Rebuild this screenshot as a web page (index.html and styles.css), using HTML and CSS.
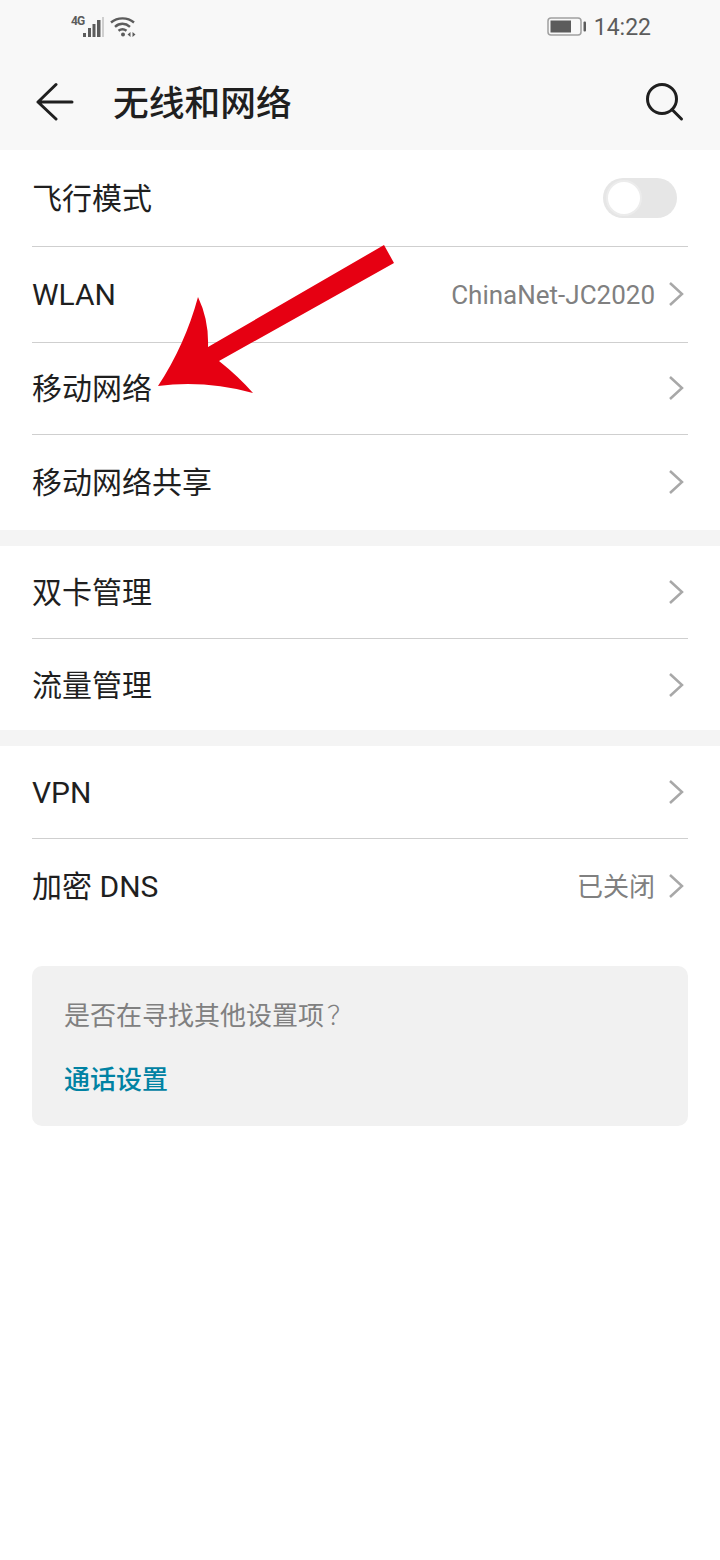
FILE: index.html
```html
<!DOCTYPE html>
<html lang="zh-CN">
<head>
  <meta charset="UTF-8">
  <meta name="viewport" content="width=device-width, initial-scale=1.0">
  <title>无线和网络</title>
  <link rel="stylesheet" href="styles.css">
</head>
<body>
  <div class="page">
    <!-- Status bar -->
    <div class="status-bar">
      <div class="status-left">
        <span class="net-type">4G</span>
        <svg class="signal" width="22" height="20" viewBox="0 0 22 20">
          <rect x="0" y="16" width="3" height="4" fill="#5c5c5c"/>
          <rect x="5" y="11" width="3" height="9" fill="#5c5c5c"/>
          <rect x="9.500" y="7" width="3" height="13" fill="#5c5c5c"/>
          <rect x="14" y="3" width="3.500" height="17" fill="#5c5c5c"/>
          <rect x="19" y="0" width="2" height="20" fill="#cfcfcf"/>
        </svg>
        <svg class="wifi" width="26" height="20" viewBox="0 0 26 20">
          <path d="M1 5.500C7.500 0 17.500 0 24 5.500" fill="none" stroke="#5c5c5c" stroke-width="2.400"/>
          <path d="M5 9.800C9.500 5.800 15.500 5.800 20 9.800" fill="none" stroke="#5c5c5c" stroke-width="2.400"/>
          <path d="M8.500 13.800C11 11.800 14 11.800 16.500 13.800" fill="none" stroke="#5c5c5c" stroke-width="2.400"/>
          <circle cx="13" cy="17.500" r="2" fill="#5c5c5c"/>
          <path d="M20.500 15v5l-3-2.500zM22.500 15v5l3-2.500z" fill="#5c5c5c"/>
        </svg>
      </div>
      <div class="status-right">
        <svg class="battery" width="40" height="20" viewBox="0 0 40 20">
          <rect x="1" y="1" width="33" height="17" rx="3" fill="none" stroke="#a0a0a0" stroke-width="1.500"/>
          <rect x="3.500" y="3.500" width="20.500" height="12" fill="#5c5c5c"/>
          <rect x="36.500" y="4.500" width="2.500" height="10" rx="1" fill="#5c5c5c"/>
        </svg>
        <span class="clock">14:22</span>
      </div>
    </div>

    <!-- Title bar -->
    <div class="title-bar">
      <svg class="back-icon" width="40" height="40" viewBox="0 0 40 40">
        <path d="M2 20H36M20 2.500L2 20L20 37" fill="none" stroke="#1f1f1f" stroke-width="3" stroke-linecap="round" stroke-linejoin="round"/>
      </svg>
      <h1>无线和网络</h1>
      <svg class="search-icon" width="40" height="40" viewBox="0 0 40 40">
        <circle cx="18" cy="17" r="14.500" fill="none" stroke="#1f1f1f" stroke-width="3"/>
        <path d="M28 27.500L37.500 37" fill="none" stroke="#1f1f1f" stroke-width="3" stroke-linecap="round"/>
      </svg>
    </div>

    <!-- Settings -->
    <div class="group group-first">
      <div class="row row-tall">
        <span class="row-label">飞行模式</span>
        <div class="switch"><div class="knob"></div></div>
      </div>
      <div class="row row-tall">
        <span class="row-label">WLAN</span>
        <span class="row-value">ChinaNet-JC2020</span>
        <svg class="chevron" width="16" height="26" viewBox="0 0 16 26"><path d="M2 2L14 13L2 24" fill="none" stroke="#a8a8a8" stroke-width="2.500"/></svg>
      </div>
      <div class="row">
        <span class="row-label">移动网络</span>
        <svg class="chevron" width="16" height="26" viewBox="0 0 16 26"><path d="M2 2L14 13L2 24" fill="none" stroke="#a8a8a8" stroke-width="2.500"/></svg>
      </div>
      <div class="row row-end">
        <span class="row-label">移动网络共享</span>
        <svg class="chevron" width="16" height="26" viewBox="0 0 16 26"><path d="M2 2L14 13L2 24" fill="none" stroke="#a8a8a8" stroke-width="2.500"/></svg>
      </div>
    </div>
    <div class="group">
      <div class="row row-mid">
        <span class="row-label">双卡管理</span>
        <svg class="chevron" width="16" height="26" viewBox="0 0 16 26"><path d="M2 2L14 13L2 24" fill="none" stroke="#a8a8a8" stroke-width="2.500"/></svg>
      </div>
      <div class="row row-end row-short">
        <span class="row-label">流量管理</span>
        <svg class="chevron" width="16" height="26" viewBox="0 0 16 26"><path d="M2 2L14 13L2 24" fill="none" stroke="#a8a8a8" stroke-width="2.500"/></svg>
      </div>
    </div>
    <div class="group group-last">
      <div class="row row-mid">
        <span class="row-label">VPN</span>
        <svg class="chevron" width="16" height="26" viewBox="0 0 16 26"><path d="M2 2L14 13L2 24" fill="none" stroke="#a8a8a8" stroke-width="2.500"/></svg>
      </div>
      <div class="row row-end">
        <span class="row-label">加密 DNS</span>
        <span class="row-value">已关闭</span>
        <svg class="chevron" width="16" height="26" viewBox="0 0 16 26"><path d="M2 2L14 13L2 24" fill="none" stroke="#a8a8a8" stroke-width="2.500"/></svg>
      </div>
    </div>

    <!-- Suggestion card -->
    <div class="hint-card">
      <p class="hint-text">是否在寻找其他设置项<span class="hint-mark">？</span></p>
      <a class="hint-link">通话设置</a>
    </div>

    <!-- Red annotation arrow -->
    <svg class="arrow" width="720" height="420" viewBox="0 0 720 420">
      <path d="M384 245L394 263L219 361Q238 376 253 393Q205 380 158 386Q185 345 198 297Q209 320 208 347Z" fill="#e60012"/>
    </svg>
  </div>
</body>
</html>
```
FILE: styles.css
```css
/* General Styles */
body {
  margin: 0;
  background: #fff;
  font-family: 'Roboto', 'Noto Sans CJK SC', sans-serif;
  color: #1f1f1f;
}

.page {
  position: relative;
  width: 720px;
  min-height: 1560px;
  overflow: hidden;
}

/* Status bar */
.status-bar {
  height: 54px;
  background: #f8f8f8;
  display: flex;
  justify-content: space-between;
  padding: 0 69px 0 71px;
  box-sizing: border-box;
}

.status-left {
  display: flex;
  align-items: flex-start;
  padding-top: 17px;
  height: 37px;
}

.net-type {
  font-size: 12px;
  font-weight: 700;
  line-height: 9px;
  letter-spacing: -1px;
  color: #5c5c5c;
  width: 12px;
}

.wifi {
  margin-left: 5px;
}

.status-right {
  display: flex;
  align-items: center;
  height: 54px;
}

.battery {
  margin-right: 7px;
}

.clock {
  font-size: 23px;
  color: #5c5c5c;
}

/* Title bar */
.title-bar {
  height: 96px;
  background: #f8f8f8;
  display: flex;
  align-items: center;
  padding: 0 36px;
}

.back-icon, .search-icon {
  flex: none;
}

.title-bar h1 {
  margin: 0 0 0 37px;
  padding-top: 4px;
  font-size: 35.750px;
  line-height: 40px;
  font-weight: 500;
  flex: 1;
}

/* Settings rows */
.group {
  background: #fff;
  padding: 0 32px;
  border-bottom: 16px solid #f4f4f4;
}

.group-first {
  padding-top: 1px;
}

.group-last {
  border-bottom: 0;
}

.row {
  height: 92px;
  box-sizing: border-box;
  display: flex;
  align-items: center;
  border-bottom: 1px solid #cfcfcf;
}

.row-tall {
  height: 96px;
}

.row-mid {
  height: 93px;
  padding-top: 2px;
}

.row-end {
  height: 95px;
  border-bottom: 0;
}

.row-short {
  height: 91px;
  padding-top: 2px;
}

.row-label {
  font-size: 30px;
  line-height: 40px;
  flex: 1;
}

.row-value {
  font-size: 26px;
  line-height: 40px;
  color: #808080;
  margin-right: 13px;
}

.chevron {
  margin-right: 4px;
  margin-bottom: 2px;
}

/* Switch */
.switch {
  width: 74px;
  height: 40px;
  border-radius: 20px;
  background: #e6e6e6;
  margin-right: 11px;
  margin-bottom: 2px;
  display: flex;
  align-items: center;
  padding-left: 3px;
  box-sizing: border-box;
}

.knob {
  width: 36px;
  height: 36px;
  box-sizing: border-box;
  border: 2px solid #ececec;
  border-radius: 50%;
  background: #fff;
}

/* Suggestion card */
.hint-card {
  margin: 32px 32px 0;
  height: 160px;
  box-sizing: border-box;
  background: #f1f1f1;
  border-radius: 10px;
  padding: 31px 32px 0;
}

.hint-text {
  margin: 0;
  font-size: 26px;
  line-height: 34px;
  color: #808080;
}

.hint-mark {
  font-family: 'Noto Sans CJK TC', sans-serif;
  font-weight: 300;
  margin-left: 3px;
}

.hint-link {
  display: block;
  margin-top: 30px;
  font-size: 26px;
  line-height: 34px;
  font-weight: 500;
  color: #0082a3;
}

/* Annotation */
.arrow {
  position: absolute;
  top: 0;
  left: 0;
}
```
